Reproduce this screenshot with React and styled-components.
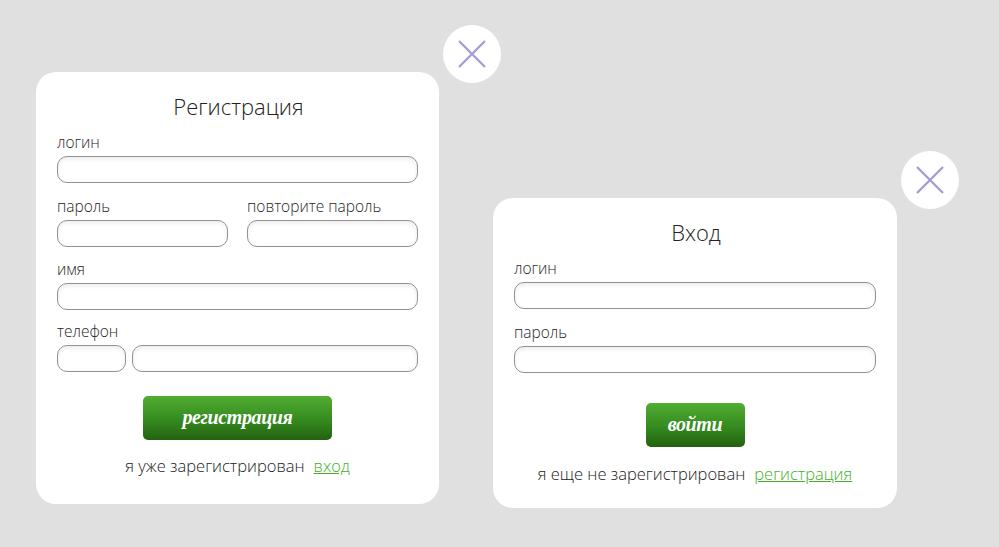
import React from 'react'
import styled, { createGlobalStyle } from 'styled-components'

const GlobalStyle = createGlobalStyle`
  html, body {
    margin: 0;
    padding: 0;
    background: #e0e0e0;
  }
  * {
    box-sizing: border-box;
  }
`

const Page = styled.div`
  display: flex;
  align-items: flex-start;
  gap: 54px;
  width: 999px;
  height: 547px;
  padding: 72px 0 0 36px;
  overflow: hidden;
  background: #e0e0e0;
  font-family: "Open Sans", "Liberation Sans", sans-serif;
  font-weight: 300;
  color: #2e2e2e;
`

const Card = styled.section`
  position: relative;
  flex: none;
  width: ${p => p.$width}px;
  height: ${p => p.$height}px;
  margin-top: ${p => p.$top || 0}px;
  padding: 19px 21px 0;
  background: #fff;
  border-radius: 20px;
`

const CloseButton = styled.button`
  position: absolute;
  top: -47px;
  right: -62px;
  display: flex;
  align-items: center;
  justify-content: center;
  width: 58px;
  height: 58px;
  padding: 0;
  border: 0;
  border-radius: 50%;
  background: #fff;
`

const Title = styled.h2`
  margin: 0 0 11px;
  padding-left: 2px;
  font-size: 22px;
  line-height: 30px;
  font-weight: 300;
  text-align: center;
  color: #222;
`

const Form = styled.form`
  display: flex;
  flex-direction: column;
  gap: ${p => p.$gap}px;
`

const Row = styled.div`
  display: flex;
  gap: ${p => p.$gap || 19}px;
  margin-top: ${p => p.$top || 0}px;
`

const Field = styled.label`
  display: flex;
  flex-direction: column;
  gap: 4px;
  flex: 1;
  min-width: 0;
  margin-top: ${p => p.$top || 0}px;
`

const LabelText = styled.span`
  font-size: 15.5px;
  line-height: 20px;
  font-weight: 300;
  color: #262626;
`

const Input = styled.input`
  display: block;
  width: ${p => (p.$width ? `${p.$width}px` : '100%')};
  flex: ${p => (p.$grow ? '1' : 'none')};
  min-width: 0;
  height: 27px;
  padding: 0 10px;
  border: 1px solid #919191;
  border-radius: 10px;
  background: #fff;
  box-shadow: inset 0 2px 4px rgba(0, 0, 0, 0.08);
  outline: none;
`

const SubmitButton = styled.button`
  display: block;
  width: ${p => p.$width}px;
  height: 44px;
  margin: ${p => p.$top}px auto 0;
  padding: 0 0 2px;
  border: 0;
  border-radius: 5px;
  background: linear-gradient(#51ad32, #348a1f 55%, #24610f);
  font-family: "Liberation Serif", serif;
  font-style: italic;
  font-weight: 700;
  font-size: 20px;
  letter-spacing: -0.4px;
  color: #fff;
`

const Footer = styled.p`
  display: flex;
  justify-content: center;
  gap: 9px;
  margin: ${p => p.$top}px 0 0;
  font-size: 16.5px;
  line-height: 22px;
  color: #222;
`

const FooterLink = styled.a`
  color: #46b02a;
  text-decoration: underline;
`

function CloseIcon() {
  return (
    <svg width="30" height="30" viewBox="0 0 30 30" fill="none">
      <path d="M2 2L28 28M28 2L2 28" stroke="#a79cd1" strokeWidth="2.4" />
    </svg>
  )
}

export default function App() {
  return (
    <>
      <GlobalStyle />
      <Page>
        <Card $width={403} $height={432}>
          <CloseButton type="button" aria-label="закрыть">
            <CloseIcon />
          </CloseButton>
          <Title>Регистрация</Title>
          <Form $gap={12}>
            <Field>
              <LabelText>логин</LabelText>
              <Input type="text" />
            </Field>
            <Row $top={1}>
              <Field>
                <LabelText>пароль</LabelText>
                <Input type="password" />
              </Field>
              <Field>
                <LabelText>повторите пароль</LabelText>
                <Input type="password" />
              </Field>
            </Row>
            <Field>
              <LabelText>имя</LabelText>
              <Input type="text" />
            </Field>
            <Field $top={-1}>
              <LabelText>телефон</LabelText>
              <Row $gap={6}>
                <Input type="text" $width={69} />
                <Input type="text" $grow />
              </Row>
            </Field>
          </Form>
          <SubmitButton type="button" $width={189} $top={24}>регистрация</SubmitButton>
          <Footer $top={15}>
            я уже зарегистрирован <FooterLink href="#">вход</FooterLink>
          </Footer>
        </Card>

        <Card $width={404} $height={310} $top={126}>
          <CloseButton type="button" aria-label="закрыть">
            <CloseIcon />
          </CloseButton>
          <Title>Вход</Title>
          <Form $gap={13}>
            <Field>
              <LabelText>логин</LabelText>
              <Input type="text" />
            </Field>
            <Field>
              <LabelText>пароль</LabelText>
              <Input type="password" />
            </Field>
          </Form>
          <SubmitButton type="button" $width={99} $top={30}>войти</SubmitButton>
          <Footer $top={16}>
            я еще не зарегистрирован <FooterLink href="#">регистрация</FooterLink>
          </Footer>
        </Card>
      </Page>
    </>
  )
}
